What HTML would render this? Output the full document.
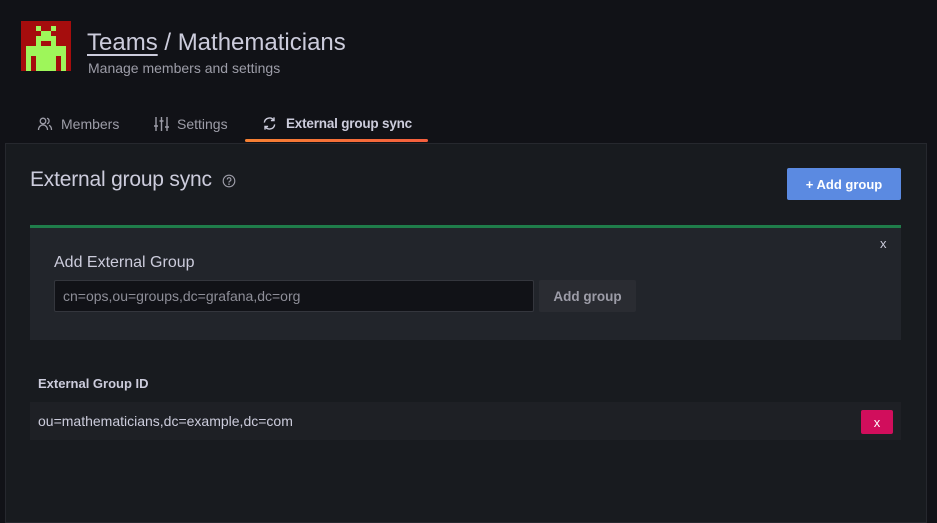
<!DOCTYPE html>
<html><head><style>
*{box-sizing:border-box;margin:0;padding:0}
body{width:937px;height:511px;background:#111217;font-family:"Liberation Sans",sans-serif;color:#ccccdc;position:relative;overflow:hidden}
.a{position:absolute}
</style></head><body>
<div class="a" style="left:21px;top:21px;width:50px;height:50px;background:#a50d0d">
<svg width="50" height="50" viewBox="0 0 10 10" shape-rendering="crispEdges" style="display:block">
<g fill="#9ef65a">
<rect x="3" y="1" width="1" height="1"/><rect x="6" y="1" width="1" height="1"/>
<rect x="4" y="2" width="2" height="1"/>
<rect x="3" y="3" width="4" height="1"/>
<rect x="3" y="4" width="1" height="1"/><rect x="6" y="4" width="1" height="1"/>
<rect x="1" y="5" width="8" height="2"/>
<rect x="1" y="7" width="1" height="3"/><rect x="3" y="7" width="4" height="3"/><rect x="8" y="7" width="1" height="3"/>
</g></svg></div>
<div class="a" style="left:87px;top:29px;font-size:24px;color:#ccccdc;white-space:nowrap"><span style="text-decoration:underline;text-underline-offset:4px">Teams</span> / Mathematicians</div>
<div class="a" style="left:88px;top:60px;font-size:14px;color:#9d9da8">Manage members and settings</div>

<div class="a" style="left:37px;top:116px;font-size:14px;color:#9d9da8;display:flex;align-items:center;gap:8px">
<svg width="16" height="16" viewBox="0 0 16 16" fill="none" stroke="#9d9da8" stroke-width="1.3"><circle cx="6" cy="5" r="2.8"/><path d="M1.5 14c0-3 2-5 4.5-5s4.5 2 4.5 5M10 2.3a2.8 2.8 0 0 1 0 5.4M12 9.3c1.5.6 2.5 2.4 2.5 4.7"/></svg>Members</div>
<div class="a" style="left:154px;top:116px;font-size:14px;color:#9d9da8;display:flex;align-items:center;gap:8px">
<svg width="15" height="16" viewBox="0 0 15 16" fill="none" stroke="#9d9da8" stroke-width="1.4"><path d="M2 1v14M7.5 1v14M13 1v14"/><path d="M0 10h4M5.5 5h4M11 11h4"/></svg>Settings</div>
<div class="a" style="left:262px;top:116px;font-size:13.5px;color:#ccccdc;font-weight:bold;display:flex;align-items:center;gap:9px;letter-spacing:-0.2px">
<svg width="15" height="15" viewBox="0 0 16 16" fill="none" stroke="#ccccdc" stroke-width="1.5"><path d="M2.5 7a5.5 5.5 0 0 1 10-2.5M13.5 9a5.5 5.5 0 0 1-10 2.5"/><path d="M12.8 1.5v3.3H9.5M3.2 14.5v-3.3h3.3"/></svg>External group sync</div>
<div class="a" style="left:245px;top:139px;width:183px;height:3px;border-radius:2px;background:linear-gradient(90deg,#f68133,#f55f3e)"></div>

<div class="a" style="left:5px;top:143px;width:922px;height:380px;background:#181b1f;border:1px solid #26282e"></div>
<div class="a" style="left:30px;top:168px;font-size:21px;color:#ccccdc;letter-spacing:-0.2px">External group sync</div>
<svg class="a" style="left:222px;top:174px" width="14" height="14" viewBox="0 0 14 14" fill="none" stroke="#9d9da8" stroke-width="1.1"><circle cx="7" cy="7" r="5.8"/><path d="M5.3 5.5a1.8 1.8 0 1 1 2.3 1.7c-.5.2-.6.5-.6 1v.4"/><circle cx="7" cy="10.2" r=".3" fill="#9d9da8"/></svg>
<div class="a" style="left:787px;top:168px;width:114px;height:32px;background:#5b8ae1;border-radius:2px;color:#fff;font-size:13px;font-weight:bold;display:flex;align-items:center;justify-content:center">+ Add group</div>

<div class="a" style="left:30px;top:225px;width:871px;height:115px;background:#22252b;border-top:3px solid #1f7d4a"></div>
<div class="a" style="left:880px;top:236px;font-size:13px;color:#ccccdc">x</div>
<div class="a" style="left:54px;top:254px;font-size:16px;color:#ccccdc">Add External Group</div>
<div class="a" style="left:54px;top:280px;width:480px;height:32px;background:#111217;border:1px solid #34363d;border-radius:2px;font-size:14px;color:#8e8e98;padding:7px 0 0 8px">cn=ops,ou=groups,dc=grafana,dc=org</div>
<div class="a" style="left:539px;top:280px;width:97px;height:32px;background:#2a2c32;border-radius:2px;font-size:13.5px;color:#9d9da8;font-weight:bold;display:flex;align-items:center;justify-content:center">Add group</div>

<div class="a" style="left:38px;top:376px;font-size:13px;font-weight:bold;color:#ccccdc">External Group ID</div>
<div class="a" style="left:30px;top:402px;width:871px;height:38px;background:#1e2025"></div>
<div class="a" style="left:38px;top:413px;font-size:14px;color:#ccccdc">ou=mathematicians,dc=example,dc=com</div>
<div class="a" style="left:861px;top:410px;width:32px;height:24px;background:#d10e5c;border-radius:2px;color:#fff;font-size:13px;display:flex;align-items:center;justify-content:center">x</div>
</body></html>
